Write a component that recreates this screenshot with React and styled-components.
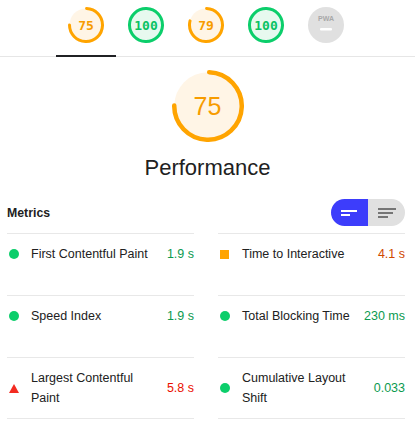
import React from 'react';
import styled, { createGlobalStyle } from 'styled-components';

const GlobalStyle = createGlobalStyle`
  body {
    margin: 0;
    background: #fff;
    font-family: "Liberation Sans", Arial, sans-serif;
    color: #212121;
  }
`;

const COLORS = {
  pass: { arc: '#0cce6b', fill: '#e7f9ef', text: '#0ac263', value: '#0b9a50' },
  average: { arc: '#ffa400', fill: '#fff5e6', text: '#f79c00', value: '#d04900' },
  fail: { arc: '#ff4e42', fill: '#ffeeee', text: '#eb0f00', value: '#eb0f00' },
};

const rating = (score) => (score >= 90 ? 'pass' : score >= 50 ? 'average' : 'fail');

const TabBar = styled.div`
  display: flex;
  justify-content: center;
  padding-right: 3px;
  box-shadow: inset 0 -1px 0 #e6e6e6;
`;

const Tab = styled.div`
  width: 60px;
  height: 57px;
  box-sizing: border-box;
  padding-top: 7px;
  display: flex;
  justify-content: center;
  border-bottom: 2px solid ${props => (props.$active ? '#202124' : 'transparent')};
`;

const GaugeWrap = styled.div`
  position: relative;
  width: ${props => props.$size}px;
  height: ${props => props.$size}px;
`;

const GaugeLabel = styled.div`
  position: absolute;
  inset: 0;
  display: flex;
  align-items: center;
  justify-content: center;
  color: ${props => props.$color};
  font-family: ${props => (props.$mono ? '"DejaVu Sans Mono", monospace' : '"Liberation Sans", Arial, sans-serif')};
  font-weight: ${props => (props.$mono ? 'bold' : 'normal')};
  font-size: ${props => props.$fontSize}px;
`;

function Gauge({ score, size, stroke, mono, fontSize }) {
  const c = COLORS[rating(score)];
  const r = (size - stroke) / 2;
  const circ = 2 * Math.PI * r;
  return (
    <GaugeWrap $size={size}>
      <svg width={size} height={size} viewBox={`0 0 ${size} ${size}`}>
        <circle cx={size / 2} cy={size / 2} r={r} fill={c.fill} />
        <circle
          cx={size / 2}
          cy={size / 2}
          r={r}
          fill="none"
          stroke={c.arc}
          strokeWidth={stroke}
          strokeLinecap="round"
          strokeDasharray={`${(score / 100) * circ - 1} ${circ}`}
          transform={`rotate(-88 ${size / 2} ${size / 2})`}
        />
      </svg>
      <GaugeLabel $color={c.text} $mono={mono} $fontSize={fontSize}>{score}</GaugeLabel>
    </GaugeWrap>
  );
}

function PwaBadge() {
  return (
    <svg width="36" height="36" viewBox="0 0 36 36">
      <circle cx="18" cy="18" r="18" fill="#e0e0e0" />
      <text x="18" y="14" textAnchor="middle" fontSize="7" fontWeight="bold" fontFamily="Liberation Sans, Arial, sans-serif" fill="#a8a8a8">PWA</text>
      <rect x="12" y="21" width="12" height="2.5" rx="1" fill="#fff" />
    </svg>
  );
}

const Hero = styled.div`
  display: flex;
  flex-direction: column;
  align-items: center;
  padding-top: 13px;
`;

const Title = styled.div`
  margin-top: 13px;
  font-size: 22px;
  line-height: 26px;
  color: #212121;
`;

const Section = styled.div`
  padding: 0 10px 0 7px;
  margin-top: 18px;
`;

const Header = styled.div`
  display: flex;
  align-items: center;
  justify-content: space-between;
  padding-bottom: 7px;
`;

const HeaderTitle = styled.div`
  font-size: 12.3px;
  font-weight: bold;
  color: #212121;
`;

const Toggle = styled.div`
  display: flex;
  height: 27px;
  border-radius: 14px;
  overflow: hidden;
`;

const ToggleButton = styled.div`
  width: 37px;
  display: flex;
  align-items: center;
  justify-content: center;
  background: ${props => (props.$active ? '#3d3dfb' : '#e0e0e0')};
`;

const Grid = styled.div`
  display: grid;
  grid-template-columns: 1fr 1fr;
  column-gap: 24px;
  grid-auto-rows: 1fr;
`;

const Metric = styled.div`
  border-top: 1px solid #e8e8e8;
  border-bottom: ${props => (props.$last ? '1px solid #e8e8e8' : 'none')};
  padding: 10px 0;
  min-height: 40px;
`;

const MetricInner = styled.div`
  display: flex;
  align-items: center;
  font-size: 12.5px;
  line-height: 20px;
`;

const IconBox = styled.div`
  width: 24px;
  flex: none;
  display: flex;
  align-items: center;
  padding-left: 2px;
  box-sizing: border-box;
`;

const Dot = styled.span`
  width: 10px;
  height: 10px;
  border-radius: 50%;
  background: #0cce6b;
`;

const Square = styled.span`
  width: 9px;
  height: 9px;
  background: #ffa400;
`;

const Triangle = styled.span`
  width: 0;
  height: 0;
  border-left: 5px solid transparent;
  border-right: 5px solid transparent;
  border-bottom: 9px solid #f32b21;
`;

const MetricName = styled.div`
  flex: 1;
  margin-right: 8px;
  color: #212121;
`;

const MetricValue = styled.div`
  color: ${props => props.$color};
  white-space: nowrap;
`;

const metrics = [
  { name: 'First Contentful Paint', value: '1.9 s', status: 'pass' },
  { name: 'Time to Interactive', value: '4.1 s', status: 'average' },
  { name: 'Speed Index', value: '1.9 s', status: 'pass' },
  { name: 'Total Blocking Time', value: '230 ms', status: 'pass' },
  { name: 'Largest Contentful Paint', value: '5.8 s', status: 'fail' },
  { name: 'Cumulative Layout Shift', value: '0.033', status: 'pass' },
];

const icons = { pass: <Dot />, average: <Square />, fail: <Triangle /> };

export default function App() {
  return (
    <>
      <GlobalStyle />
      <TabBar>
        {[75, 100, 79, 100].map((s, i) => (
          <Tab key={i} $active={i === 0}>
            <Gauge score={s} size={36} stroke={3} mono fontSize={13} />
          </Tab>
        ))}
        <Tab>
          <PwaBadge />
        </Tab>
      </TabBar>
      <Hero>
        <Gauge score={75} size={72} stroke={4.5} fontSize={25} />
        <Title>Performance</Title>
      </Hero>
      <Section>
        <Header>
          <HeaderTitle>Metrics</HeaderTitle>
          <Toggle>
            <ToggleButton $active>
              <svg width="18" height="10" viewBox="0 0 18 10">
                <rect x="0" y="2" width="16" height="2" fill="#fff" />
                <rect x="0" y="6" width="9" height="2" fill="#fff" />
              </svg>
            </ToggleButton>
            <ToggleButton>
              <svg width="18" height="12" viewBox="0 0 18 12">
                <rect x="0" y="1" width="18" height="2" fill="#757575" />
                <rect x="0" y="5" width="15" height="2" fill="#757575" />
                <rect x="0" y="9" width="10" height="2" fill="#757575" />
              </svg>
            </ToggleButton>
          </Toggle>
        </Header>
        <Grid>
          {metrics.map((m, i) => (
            <Metric key={m.name} $last={i >= 4}>
              <MetricInner>
                <IconBox>{icons[m.status]}</IconBox>
                <MetricName>{m.name}</MetricName>
                <MetricValue $color={COLORS[m.status].value}>{m.value}</MetricValue>
              </MetricInner>
            </Metric>
          ))}
        </Grid>
      </Section>
    </>
  );
}
